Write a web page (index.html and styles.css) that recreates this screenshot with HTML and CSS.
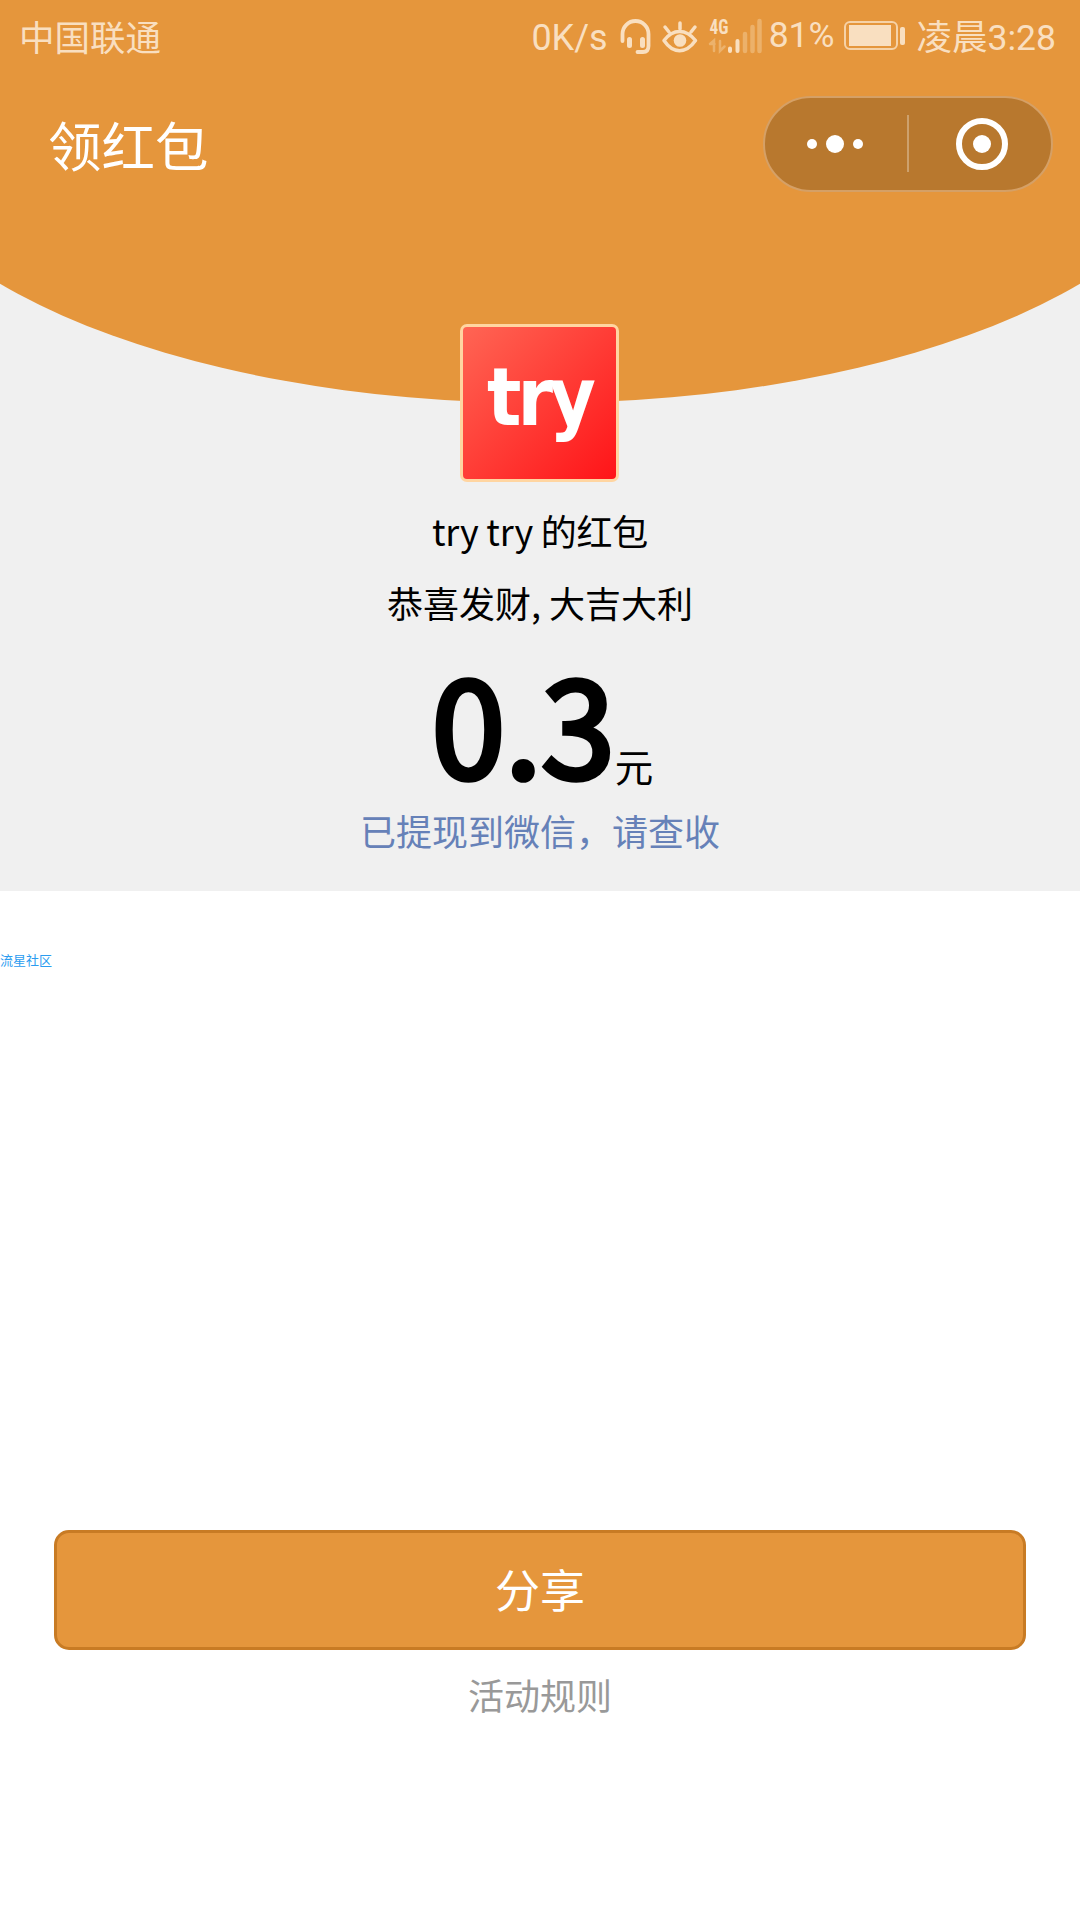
FILE: index.html
```
<!DOCTYPE html>
<html lang="zh-CN">
<head>
  <meta charset="UTF-8" />
  <title>领红包</title>
  <link rel="stylesheet" href="styles.css">
</head>
<body>
  <div class="top">
    <div class="status-bar">
      <span class="carrier">中国联通</span>
      <span class="speed">0K/s</span>
      <svg class="status-icons" width="145" height="40" viewBox="0 0 145 40" fill="none" stroke="#f9dfc0" stroke-linecap="round">
        <!-- headset -->
        <path d="M3.500 24V17A13 13 0 0 1 29.500 17V29Q29.500 35 24 35H18.500" stroke-width="3.800" />
        <path d="M10.500 22.500V28.500M23.500 22.500V28.500" stroke-width="5" />
        <!-- eye -->
        <path d="M45 23.500C54 11.500 67 11.500 76.500 23.500C67 37 54 37 45 23.500ZM61 12V6M50 15L46 10M72 15L76 10" stroke-width="3.500" stroke-linejoin="round" />
        <circle cx="61" cy="23.500" r="6.300" fill="#f9dfc0" stroke="none" />
        <!-- signal -->
        <text class="net" x="90.500" y="17" textLength="19" lengthAdjust="spacingAndGlyphs">4G</text>
        <path d="M91 27L95 23.500V34M95.500 27H92M101 24V34L105.500 29.500" stroke="#ecb26c" stroke-width="2.500" />
        <path d="M111 31.500V34M118.500 24V34" stroke-width="4" />
        <path d="M126 17V34M133.500 10V34M140.500 4V34" stroke="#ecb16a" stroke-width="4.500" />
      </svg>
      <span class="percent">81%</span>
      <span class="battery"><i></i></span>
      <span class="clock">凌晨3:28</span>
    </div>
    <div class="nav-bar">
      <div class="nav-title">领红包</div>
      <div class="capsule">
        <div class="dots"><i></i><i class="big"></i><i></i></div>
        <div class="close"><span class="ring"><i></i></span></div>
      </div>
    </div>
    <div class="logo"><span>try</span></div>
    <div class="sender">try try 的红包</div>
    <div class="wish">恭喜发财, 大吉大利</div>
    <div class="amount"><b>0.3</b><span>元</span></div>
    <div class="tip">已提现到微信，请查收</div>
  </div>
  <div class="community">流星社区</div>
  <button class="share">分享</button>
  <div class="rules">活动规则</div>
</body>
</html>
```

FILE: styles.css
```
* { box-sizing:border-box; }
body { margin:0; height:1920px; background:#fff; color:#000; font-family:"Noto Sans CJK SC", sans-serif; overflow:hidden; text-align:center; }
.top { position:relative; z-index:0; height:891px; background:#f0f0f0; overflow:hidden; }
.top::before { content:""; position:absolute; z-index:-1; left:-135px; top:-193px; width:1350px; height:596px; border-radius:50%; background:#e5963c; }
.top::after { content:""; position:absolute; z-index:-2; left:0; top:0; width:100%; height:150px; background:#e5963c; }

.status-bar { display:flex; align-items:center; height:72px; padding:0 24px 0 19px; color:#f9dfc0; font-size:36px; line-height:40px; white-space:nowrap; }
.carrier { flex:1; font-size:35.5px; text-align:left; }
.speed, .percent { font-family:Roboto, sans-serif; }
.speed { padding-top:4px; }
.status-icons { margin:2px 5px 0 11px; overflow:visible; }
.net { font:bold 20px "Roboto Condensed", Roboto, sans-serif; fill:#f9dfc0; stroke:none; }
.percent { font-size:35.5px; padding-bottom:2px; }
.battery { position:relative; width:54px; height:29px; margin:0 19px 2px 9px; padding:3px; border:2px solid #f6d2a7; border-radius:6px; }
.battery i { display:block; width:42px; height:21px; margin-top:-1px; background:#f9dfc0; }
.battery::after { content:""; position:absolute; right:-9px; top:4px; width:5px; height:18px; border-radius:2px; background:#f9dfc0; }
.clock { padding-top:3px; font-family:Roboto, "Noto Sans CJK SC", sans-serif; font-size:35.5px; }

.nav-bar { display:flex; justify-content:space-between; height:146px; padding:24px 27px 0 48px; color:#fff; }
.nav-title { height:96px; font-size:53.5px; line-height:95px; }
.capsule { display:flex; width:290px; height:96px; border:2px solid #d5a066; border-radius:48px; background:#b8782e; }
.dots, .close { width:50%; display:flex; align-items:center; justify-content:center; }
.dots { position:relative; gap:9px; padding-right:4px; }
.dots::after { content:""; position:absolute; right:-1px; top:17px; width:2px; height:57px; background:#cda16d; }
.dots i { width:10px; height:10px; border-radius:50%; background:#fff; }
.dots i.big { width:18px; height:18px; }
.ring { display:flex; align-items:center; justify-content:center; width:52px; height:52px; margin-left:4px; border:6px solid #fff; border-radius:50%; }
.ring i { width:18px; height:18px; border-radius:50%; background:#fff; }

.logo { width:159px; height:158px; margin:106px 0 0 460px; border:3px solid #ffd5a1; border-radius:7px; background:linear-gradient(135deg, #ff6554, #ff1418); color:#fff; }
.logo span { display:block; font:bold 80px/142px "DejaVu Sans Condensed", "DejaVu Sans", sans-serif; letter-spacing:-4px; }
.sender, .wish { font-size:36px; line-height:72px; }
.sender { margin-top:12px; letter-spacing:-.25px; }
.amount { height:160px; padding-left:5px; line-height:166px; }
.amount b { font-size:132px; font-weight:400; -webkit-text-stroke:5.5px #000; }
.amount span { font-size:38.5px; line-height:40px; vertical-align:-4px; }
.tip { margin-top:2px; color:#6681b8; font-size:36px; line-height:60px; }

.community { margin-top:60px; color:#2b9cf0; font-size:13px; line-height:18px; text-align:left; }
.share { display:block; width:972px; height:120px; margin:561px auto 0; padding:0 0 2px; border:3px solid #c87b24; border-radius:15px; background:#e5963c; color:#fff; font:45px/112px "Noto Sans CJK SC", sans-serif; }
.rules { margin-top:14px; color:#999; font-size:36px; line-height:60px; }
```
